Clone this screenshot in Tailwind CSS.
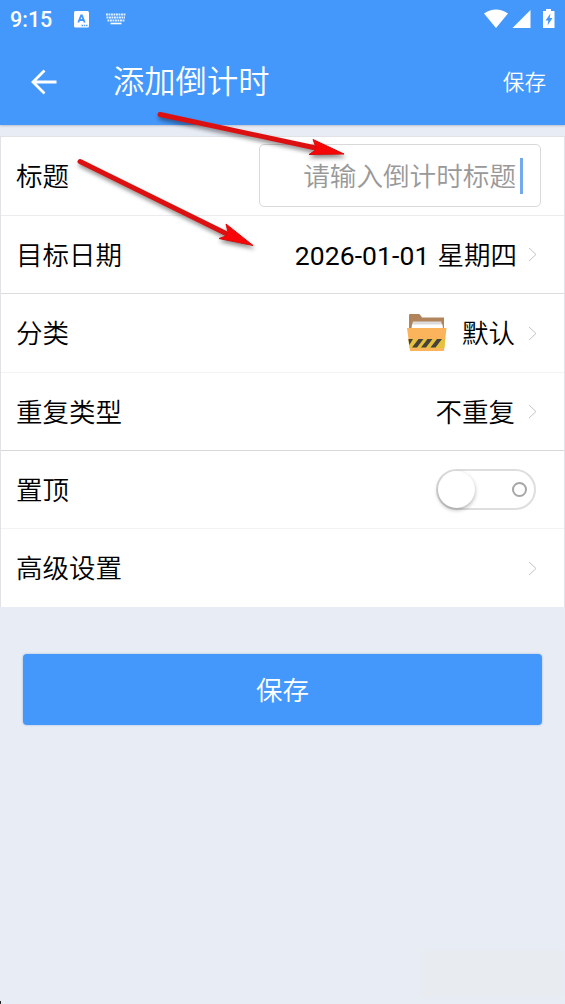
<!DOCTYPE html>
<html lang="zh-CN">
<head>
<meta charset="utf-8">
<meta name="viewport" content="width=device-width, initial-scale=1">
<title>添加倒计时</title>
<script src="https://cdn.jsdelivr.net/npm/@tailwindcss/browser@4"></script>
</head>
<body class="relative flex h-[1004px] w-[565px] flex-col overflow-hidden bg-[#e8ecf5] font-['Roboto','Noto_Sans_CJK_SC',sans-serif] text-[26.5px] font-[350] leading-none text-black">
  <header class="flex h-[125px] shrink-0 flex-col bg-[#4598fb] text-white shadow-[0_1px_2px_rgba(0,0,0,0.2)]">
    <div class="flex h-[38px] items-center pl-[10px] pr-[10px]">
      <span class="w-[64px] pt-px text-[21.5px] font-medium">9:15</span>
      <svg class="h-[17px] w-[15px]" viewBox="0 0 15 17"><rect width="15" height="16.5" rx="1.5" fill="#fff"/><path d="M4.3 11.5L7.1 4.3h.8l2.8 7.2M5.4 9h4.2" fill="none" stroke="#4598fb" stroke-width="1.8"/><path d="M7.5 14.5h6" stroke="#4598fb" stroke-width="1.3" stroke-dasharray="1.4 .9"/></svg>
      <svg class="ml-[17px] h-[12px] w-[20px]" viewBox="0 0 20 12"><path d="M0 1.5h19.5M.5 4.5h18.5M1.500 7.500h17" stroke="#fff" stroke-width="2.200" stroke-dasharray="1.9 .6" opacity=".85"/><path d="M4.500 10.500h11" stroke="#fff" stroke-width="1.600"/></svg>
      <svg class="ml-auto h-[20px] w-[72px]" viewBox="0 0 72 20"><path d="M1 4.500Q13 -3.500 25 4.500L13 19Z" fill="#fff"/><path d="M29.500 19L47.500 1V19Z" fill="#fff"/><path d="M60 2h3V0h5v2h3.500v17H60Z" fill="#fff"/><path d="M67.500 4.500L62.500 11.500h2.800l-.8 5 5-7.500h-2.800z" fill="#4598fb"/></svg>
    </div>
    <div class="flex h-[87px] items-center pl-[31px] pr-[19px]">
      <svg class="h-[26px] w-[27px]" viewBox="0 0 27 26"><path d="M25.500 13H2.500M13.500 1.500L2 13l11.500 11.500" fill="none" stroke="#fff" stroke-width="2.800"/></svg>
      <h1 class="ml-[55px] pt-[3px] text-[31.3px] font-[350]">添加倒计时</h1>
      <button class="ml-auto pt-[2px] text-[21.6px] font-[350] leading-none">保存</button>
    </div>
  </header>

  <main class="mt-[11px]">
    <section class="border-x border-t border-[#e1e2e5] bg-white">
      <div class="flex h-[79px] items-center justify-between border-b border-[#ececec] pl-[15px] pr-[23px]">
        <span class="pt-[3px]">标题</span>
        <div class="mb-px flex h-[63px] w-[282px] items-center justify-end rounded-[5px] border border-[#d9d9d9] pr-[17px]">
          <span class="pt-[3px] text-[26.600px] text-[#999]">请输入倒计时标题</span>
          <span class="ml-[4px] h-[36px] w-[3px] bg-[#73a9ed]"></span>
        </div>
      </div>
      <div class="flex h-[78px] items-center border-b border-[#dcdcdc] pl-[15px] pr-[27px]">
        <span class="pt-[3px]">目标日期</span>
        <span class="ml-auto pt-[3px] font-normal tracking-[0.1px]">2026-01-01</span>
        <span class="ml-[8px] pt-[3px]">星期四</span>
        <svg class="ml-[11px] h-[15px] w-[9px]" viewBox="0 0 9 15"><path d="M1 1l7 6.500-7 6.500" fill="none" stroke="#c4c4c4"/></svg>
      </div>
      <div class="flex h-[79px] items-center border-b border-[#f3f3f3] pl-[15px] pr-[27px]">
        <span class="pt-[3px]">分类</span>
        <svg class="ml-auto h-[38px] w-[40px]" viewBox="0 0 40 38">
          <path d="M2 1Q2 0 3 0H12Q13 0 15 3.500H37V16H2Z" fill="#b1845c"/>
          <path d="M4.500 13L6 7.500H34L36 13V16H4.500Z" fill="#dedbdc"/><path d="M5 10.500H35.500V16H5Z" fill="#fff"/>
          <path d="M0 14H39.500L37 37H3Z" fill="#fbb45c"/>
          <path d="M1.300 25H38.200L37.300 34H2.500Z" fill="#e6c13c"/>
          <path d="M1.500 25H6L2.300 31ZM11.500 25h5l-6.500 8.500h-5zM20.500 25h5l-6.500 8.500h-5zM30 25h5l-6.500 8.500h-5z" fill="#46413c"/>
        </svg>
        <span class="ml-[15px] pt-[3px]">默认</span>
        <svg class="ml-[13px] h-[15px] w-[9px]" viewBox="0 0 9 15"><path d="M1 1l7 6.500-7 6.500" fill="none" stroke="#c4c4c4"/></svg>
      </div>
      <div class="flex h-[78px] items-center border-b border-[#d8d8d8] pl-[15px] pr-[27px]">
        <span class="pt-[3px]">重复类型</span>
        <span class="ml-auto pt-[3px]">不重复</span>
        <svg class="ml-[13px] h-[15px] w-[9px]" viewBox="0 0 9 15"><path d="M1 1l7 6.500-7 6.500" fill="none" stroke="#c4c4c4"/></svg>
      </div>
      <div class="flex h-[78px] items-center justify-between border-b border-[#f3f3f3] pl-[15px] pr-[28px]">
        <span class="pt-[3px]">置顶</span>
        <div class="flex h-[41px] w-[100px] items-center justify-between rounded-full border-2 border-[#dedede] pr-[7px]">
          <span class="size-[37px] rounded-full bg-white shadow-[0_2px_4px_rgba(0,0,0,0.3)]"></span>
          <span class="size-[15px] rounded-full border-2 border-[#a6a6a6]"></span>
        </div>
      </div>
      <div class="flex h-[78px] items-center justify-between pl-[15px] pr-[27px]">
        <span class="pt-[3px]">高级设置</span>
        <svg class="h-[15px] w-[9px]" viewBox="0 0 9 15"><path d="M1 1l7 6.500-7 6.500" fill="none" stroke="#c4c4c4"/></svg>
      </div>
    </section>
    <button class="mx-[23px] mt-[47px] flex h-[71px] w-[519px] items-center justify-center rounded-[4px] bg-[#4598fb] pt-[3px] font-[350] leading-none text-white shadow-[0_0_2px_rgba(69,120,180,0.5)]">保存</button>
  </main>

  <div class="mb-[7px] ml-[422px] mt-auto h-[47px] w-[141px] bg-[#e8ebef] blur-[1px]"></div>

  <svg class="pointer-events-none absolute left-0 top-0 h-[270px] w-[565px] drop-shadow-[1px_3px_2px_rgba(0,0,0,0.45)]" viewBox="0 0 565 270">
    <path d="M160 114.500L318 148.500M80 161.500L228 234.500" stroke="#dc1010" stroke-width="5" stroke-linecap="round"/>
    <path d="M344 154L313 139.500L316 147L315 150.500L309 154.500ZM253 245.500L226 224L228 232L226 236L219 238.500Z" fill="#f60606" stroke="#d80c0c"/>
  </svg>
  <span class="absolute bottom-0 left-0 h-[3px] w-px bg-[#222]"></span>
</body>
</html>
